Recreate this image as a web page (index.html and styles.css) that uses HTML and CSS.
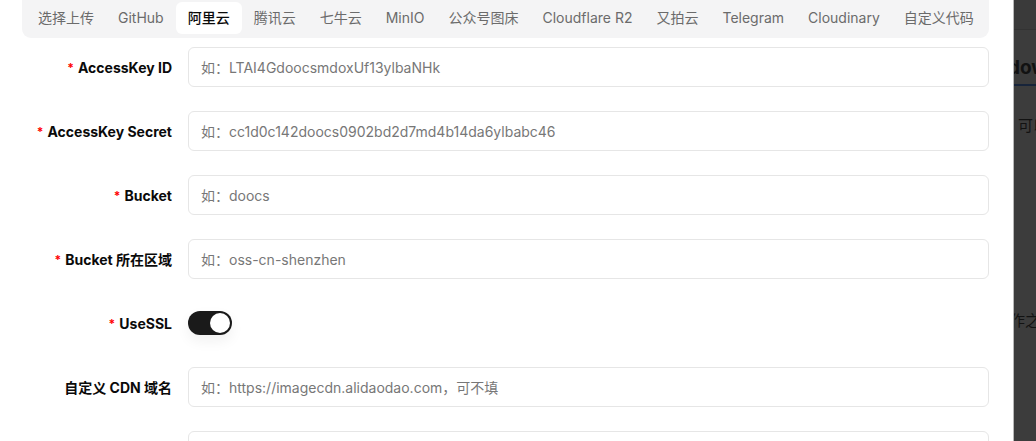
FILE: index.html
```html
<!DOCTYPE html>
<html lang="zh-CN">
<head>
<meta charset="utf-8">
<title>图床设置</title>
<link rel="stylesheet" href="styles.css">
</head>
<body>
<div class="page">
  <main class="dialog">
    <nav class="tabs">
      <span class="tab">选择上传</span>
      <span class="tab">GitHub</span>
      <span class="tab active">阿里云</span>
      <span class="tab">腾讯云</span>
      <span class="tab">七牛云</span>
      <span class="tab">MinIO</span>
      <span class="tab">公众号图床</span>
      <span class="tab">Cloudflare R2</span>
      <span class="tab">又拍云</span>
      <span class="tab">Telegram</span>
      <span class="tab">Cloudinary</span>
      <span class="tab">自定义代码</span>
    </nav>
    <form class="form">
      <label class="label"><span class="req">*</span>AccessKey ID</label>
      <input class="input" type="text" placeholder="如：LTAI4GdoocsmdoxUf13ylbaNHk">
      <label class="label"><span class="req">*</span>AccessKey Secret</label>
      <input class="input" type="text" placeholder="如：cc1d0c142doocs0902bd2d7md4b14da6ylbabc46">
      <label class="label"><span class="req">*</span>Bucket</label>
      <input class="input" type="text" placeholder="如：doocs">
      <label class="label"><span class="req">*</span>Bucket 所在区域</label>
      <input class="input" type="text" placeholder="如：oss-cn-shenzhen">
      <label class="label"><span class="req">*</span>UseSSL</label>
      <div class="switch-cell"><span class="switch"><span class="knob"></span></span></div>
      <label class="label">自定义 CDN 域名</label>
      <input class="input" type="text" placeholder="如：https://imagecdn.alidaodao.com，可不填">
      <label class="label"></label>
      <input class="input" type="text">
    </form>
  </main>
  <aside class="backdrop">
    <div class="bd-top"></div>
    <div class="bd-title"><span>dow</span></div>
    <div class="bd-text first">可以</div>
    <div class="bd-text second">作之</div>
  </aside>
</div>
</body>
</html>
```

FILE: styles.css
```css
html, body {
  margin: 0;
  padding: 0;
  height: 100%;
  overflow: hidden;
  background: #ffffff;
  font-family: "Inter", "Noto Sans CJK SC", sans-serif;
}

.page {
  display: flex;
  height: 441px;
  overflow: hidden;
}

.dialog {
  flex: 0 0 1013px;
  min-width: 0;
  overflow: hidden;
  box-sizing: border-box;
  padding: 0 24px 0 22px;
  background: #ffffff;
}

.tabs {
  display: flex;
  margin-top: -2px;
  padding: 4px;
  background: #f4f4f5;
  border-radius: 0 0 9px 9px;
}

.tab {
  height: 32px;
  line-height: 32px;
  padding: 0 12px;
  font-size: 14px;
  color: #6b6b6b;
  border-radius: 6px;
  white-space: nowrap;
}

.tab.active {
  background: #ffffff;
  color: #0a0a0a;
  font-weight: 500;
}

.form {
  display: grid;
  grid-template-columns: 150px minmax(0, 1fr);
  column-gap: 16px;
  row-gap: 24px;
  margin-top: 9px;
  grid-auto-rows: 40px;
}

.label {
  display: flex;
  align-items: center;
  justify-content: flex-end;
  font-size: 14px;
  font-weight: 700;
  color: #0a0a0a;
  white-space: nowrap;
}

.req {
  color: #f00;
  font-size: 12px;
  margin-right: 4px;
}

.input {
  box-sizing: border-box;
  height: 40px;
  width: 100%;
  min-width: 0;
  border: 1px solid #e6e6e6;
  border-radius: 6px;
  padding: 0 12px;
  font-family: inherit;
  font-size: 14px;
  color: #0a0a0a;
  background: #fff;
  outline: none;
}

.input::placeholder {
  color: #777777;
}

.switch-cell {
  display: flex;
  align-items: center;
}

.switch {
  display: flex;
  align-items: center;
  justify-content: flex-end;
  box-sizing: border-box;
  width: 44px;
  height: 24px;
  padding: 2px;
  border-radius: 12px;
  background: #1a1a1a;
  box-shadow: 0 6px 14px rgba(0, 0, 0, 0.06);
}

.knob {
  width: 20px;
  height: 20px;
  border-radius: 50%;
  background: #ffffff;
}

.backdrop {
  flex: 1 1 auto;
  min-width: 0;
  overflow: hidden;
  background: #3c3c3c;
  border-left: 1px solid #b8b8b8;
  color: #121212;
}

.bd-top {
  height: 29px;
  border-bottom: 1px solid #333333;
  background: #3a3a3a;
}

.bd-title {
  margin-top: 25px;
  height: 29px;
  border-bottom: 2px solid #17243a;
  white-space: nowrap;
}

.bd-title span {
  display: block;
  margin-left: -6px;
  font-size: 19px;
  font-weight: 700;
  line-height: 26px;
}

.bd-text {
  font-size: 15px;
  white-space: nowrap;
  margin-left: 4px;
  line-height: 20px;
}

.bd-text.first {
  margin-top: 30px;
}

.bd-text.second {
  margin-left: -4px;
  margin-top: 175px;
}
```
